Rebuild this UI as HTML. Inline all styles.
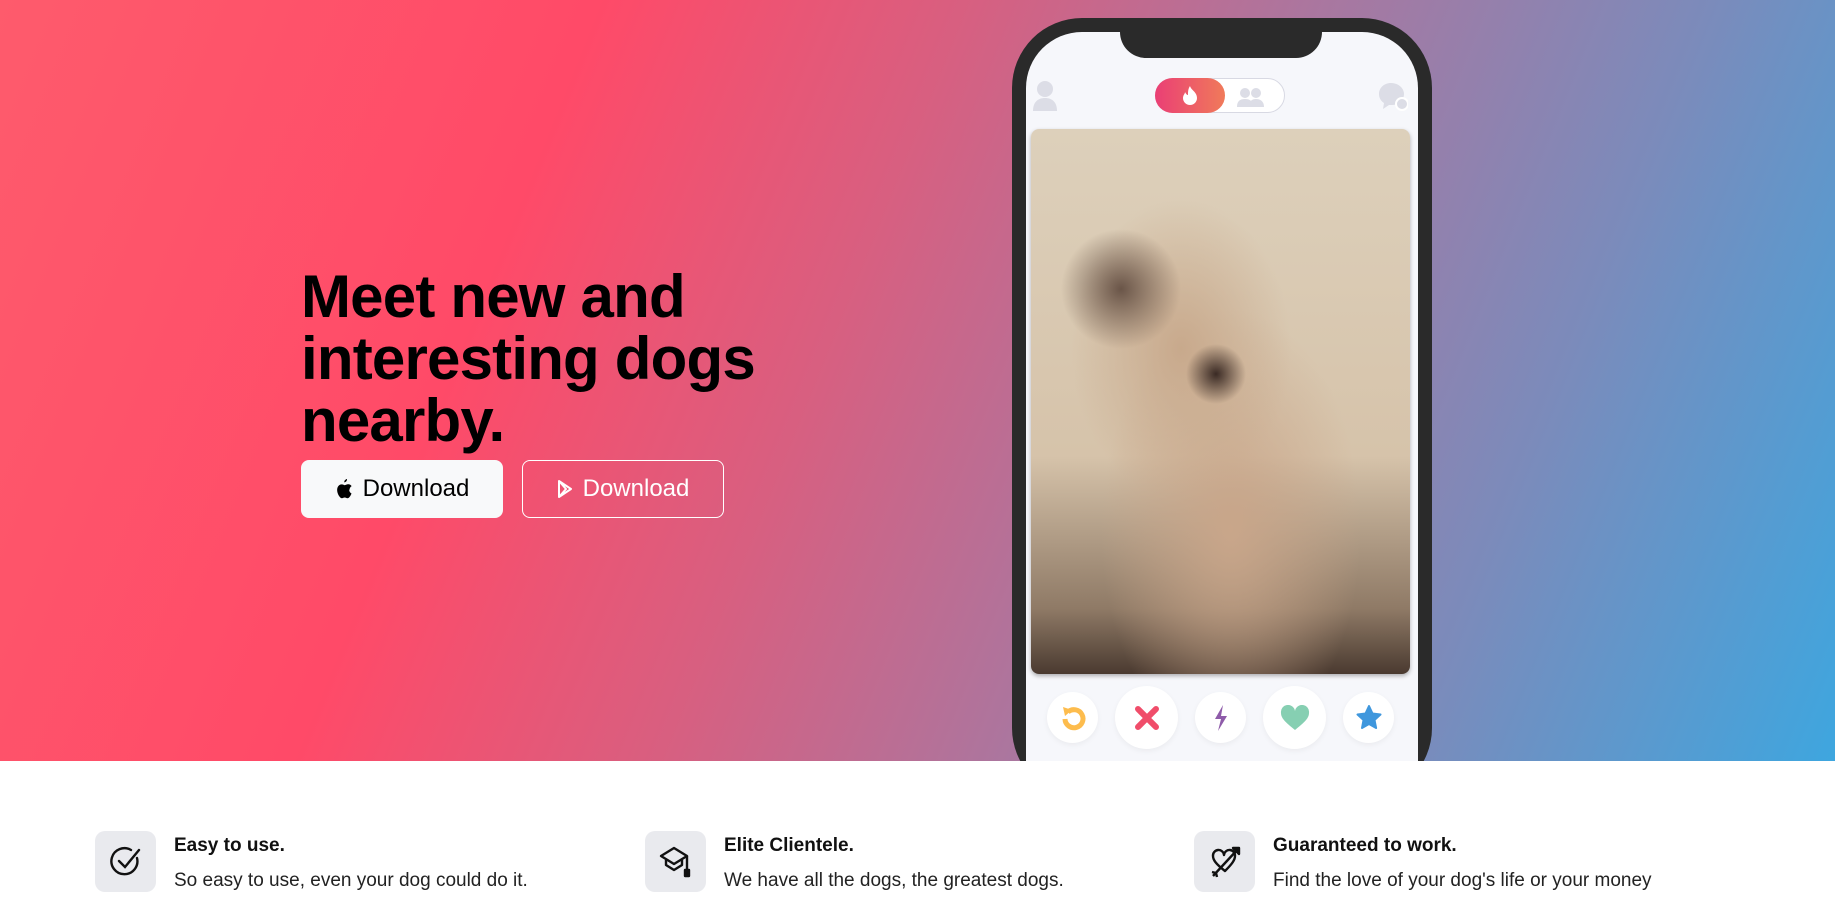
<!DOCTYPE html>
<html><head><meta charset="utf-8"><style>
*{margin:0;padding:0;box-sizing:border-box}
body{width:1835px;height:902px;overflow:hidden;background:#fff;font-family:"Liberation Sans",sans-serif;position:relative}
.hero{position:absolute;left:0;top:0;width:1835px;height:761px;overflow:hidden;background:linear-gradient(112deg,#fe5b6c 0%,#ff4a68 28%,#d85f80 45%,#a977a0 62%,#7b8bbb 80%,#3ea6df 100%)}
h1{position:absolute;left:301px;top:266px;font-size:60px;line-height:62px;font-weight:bold;color:#000;letter-spacing:-0.8px}
.btn{position:absolute;top:460px;height:58px;width:202px;border-radius:8px;font-size:24px;display:flex;align-items:center;justify-content:center;gap:10px}
.b1{left:301px;background:#f8f9fa;color:#000}
.b2{left:522px;border:1.5px solid #fff;color:#fff}
.phone{position:absolute;left:1012px;top:18px;width:420px;height:780px;background:#2a2a2a;border-radius:70px}
.screen{position:absolute;left:1026px;top:32px;width:392px;height:760px;background:#f6f7fb;border-radius:56px 56px 0 0}
.notch{position:absolute;left:1120px;top:18px;width:202px;height:40px;background:#2a2a2a;border-radius:0 0 26px 26px}
.photo{position:absolute;left:1031px;top:129px;width:379px;height:545px;border-radius:8px;background:radial-gradient(ellipse 60px 60px at 90px 160px,#6a5548,transparent),radial-gradient(ellipse 30px 30px at 185px 245px,#3a2a24,transparent),radial-gradient(ellipse 110px 150px at 150px 220px,#c8a98c,transparent),radial-gradient(ellipse 130px 220px at 200px 400px,#c9a68a,transparent),linear-gradient(180deg,#ddd0bb 0%,#d6c3aa 60%,#8f7a66 88%,#4a3a30 100%);box-shadow:0 2px 4px rgba(0,0,0,.3)}
.c{position:absolute;border-radius:50%;background:#fff;box-shadow:0 2px 6px rgba(0,0,0,.05);display:flex;align-items:center;justify-content:center;font-size:28px}
.feat{position:absolute;top:831px}
.ib{position:absolute;left:0;top:0;width:61px;height:61px;border-radius:10px;background:#e9eaee;display:flex;align-items:center;justify-content:center}
.t{position:absolute;left:79px;top:4px;font-size:19px;font-weight:bold;white-space:nowrap;color:#111}
.d{position:absolute;left:79px;top:39px;font-size:19px;white-space:nowrap;color:#222}
</style></head><body>
<div class="hero">
<h1>Meet new and<br>interesting dogs<br>nearby.</h1>
<div class="btn b1"><svg width="18" height="20" viewBox="0 0 18 20"><path d="M12 0c.2 1.5-1 3.3-2.7 3.4C9 2 10.3.3 12 0zM14.6 10.6c0-2.4 2-3.4 2-3.5-1.1-1.6-2.8-1.8-3.4-1.8-1.4-.1-2.8.9-3.5.9s-1.8-.9-3-.8C5.1 5.4 3.7 6.3 2.9 7.700c-1.6 2.8-.4 6.9 1.1 9.2.8 1.1 1.7 2.3 2.8 2.3 1.1 0 1.6-.7 2.9-.7s1.7.7 2.9.7 1.9-1.1 2.7-2.2c.8-1.3 1.2-2.5 1.2-2.6 0 0-2.3-.9-2.3-3.8z" fill="#000"/></svg>Download</div>
<div class="btn b2"><svg width="16" height="18" viewBox="0 0 16 18"><path d="M2 1l12 8-12 8z M2 1l7 8-7 8" fill="none" stroke="#fff" stroke-width="2" stroke-linejoin="round"/></svg>Download</div>
<div class="phone"></div>
<div class="screen"></div>
<div class="notch"></div>
<svg style="position:absolute;left:1032px;top:80px" width="26" height="32" viewBox="0 0 26 32"><circle cx="13" cy="9" r="8" fill="#dcdde6"/><path d="M1 31c0-9 5-13 12-13s12 4 12 13z" fill="#dcdde6"/></svg>
<div style="position:absolute;left:1155px;top:78px;width:130px;height:35px;border:1.5px solid #d8d9e3;border-radius:18px;background:#fff"></div>
<div style="position:absolute;left:1155px;top:78px;width:70px;height:35px;border-radius:18px;background:linear-gradient(90deg,#ea3f75,#f07a5a);display:flex;align-items:center;justify-content:center"><svg width="16" height="20" viewBox="0 0 16 20"><path d="M8 0c1 4 7 6 7 12a7 7 0 0 1-14 0c0-3 2-4 2-6 1 2 2 3 3 3C6 6 6 3 8 0z" fill="#fff"/></svg></div>
<svg style="position:absolute;left:1236px;top:86px" width="30" height="22" viewBox="0 0 30 22"><circle cx="9" cy="7" r="5" fill="#dcdde6"/><circle cx="20" cy="7" r="5" fill="#dcdde6"/><path d="M1 21c0-6 3-8 8-8s8 2 8 8zM13 21c0-6 3-8 7-8s8 2 8 8z" fill="#dcdde6"/></svg>
<svg style="position:absolute;left:1378px;top:82px" width="30" height="30" viewBox="0 0 30 30"><path d="M13 1C6 1 1 6 1 12c0 4 2 7 5 9l-1 6 6-4c1 0 2 0 3 0 7 0 12-5 12-11S20 1 13 1z" fill="#dcdde6"/><circle cx="24" cy="22" r="6" fill="#dcdde6" stroke="#fff" stroke-width="2"/></svg>
<div class="photo"></div>
<div class="c" style="left:1047px;top:692px;width:51px;height:51px"><svg width="26" height="26" viewBox="0 0 26 26"><path d="M8 7a9 9 0 1 1-3 7" fill="none" stroke="#fdbc4d" stroke-width="5"/><path d="M3 2l9 3-7 6z" fill="#fdbc4d"/></svg></div>
<div class="c" style="left:1115px;top:686px;width:63px;height:63px"><svg width="26" height="26" viewBox="0 0 26 26"><path d="M4 4l18 18M22 4L4 22" stroke="#f04d6a" stroke-width="6" stroke-linecap="round"/></svg></div>
<div class="c" style="left:1195px;top:692px;width:51px;height:51px"><svg width="16" height="26" viewBox="0 0 16 26"><path d="M10 0L2 14h6l-3 12 9-15H8z" fill="#8e5ba9"/></svg></div>
<div class="c" style="left:1263px;top:686px;width:63px;height:63px"><svg width="30" height="26" viewBox="0 0 30 26"><path d="M15 25C5 17 1 13 1 8a7 7 0 0 1 14-2 7 7 0 0 1 14 2c0 5-4 9-14 17z" fill="#86cfb2"/></svg></div>
<div class="c" style="left:1343px;top:692px;width:51px;height:51px"><svg width="26" height="26" viewBox="0 0 26 26"><path d="M13 1l3.5 7.5 8 1-6 5.5 1.6 8L13 19l-7 4 1.5-8-6-5.5 8-1z" fill="#3f97dd" stroke="#3f97dd" stroke-width="2" stroke-linejoin="round"/></svg></div>
</div>

<div class="feat" style="left:95px"><div class="ib"><svg width="34" height="34" viewBox="0 0 34 34" fill="none" stroke="#111" stroke-width="2.4" stroke-linecap="round"><path d="M28 13a13 13 0 1 1-6-8"/><path d="M10 16l6 6 14-17"/></svg></div><div class="t">Easy to use.</div><div class="d">So easy to use, even your dog could do it.</div></div>
<div class="feat" style="left:645px"><div class="ib"><svg width="36" height="34" viewBox="0 0 36 34" fill="none" stroke="#111" stroke-width="2.4" stroke-linejoin="round"><path d="M16 3l13 8-13 8-13-8z"/><path d="M8 15v5l8 5 8-5v-5"/><path d="M29 11v14"/><rect x="27" y="25" width="4" height="6" fill="#111"/></svg></div><div class="t">Elite Clientele.</div><div class="d">We have all the dogs, the greatest dogs.</div></div>
<div class="feat" style="left:1194px"><div class="ib"><svg width="36" height="36" viewBox="0 0 36 36" fill="none" stroke="#111" stroke-width="2.4" stroke-linejoin="round"><path d="M18 27C9 20 6 16 6 12a5.5 5.5 0 0 1 11-1 5.5 5.5 0 0 1 11 1c0 4-3 8-10 15z"/><path d="M6 32L31 5"/><path d="M26 4h6v6z" fill="#111"/><path d="M5 28l4 1 1 4" /></svg></div><div class="t">Guaranteed to work.</div><div class="d">Find the love of your dog's life or your money</div></div>
</body></html>
